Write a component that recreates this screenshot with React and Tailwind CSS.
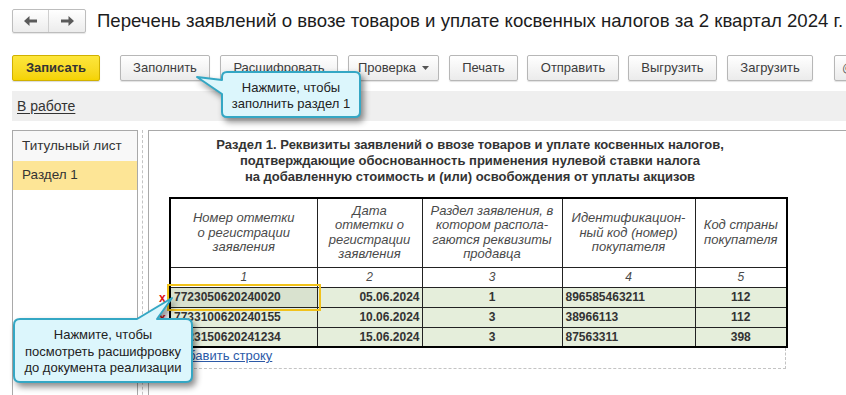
import React from "react";

const btn =
  "h-[26px] shrink-0 rounded-[2px] border border-[#b7b7b7] bg-linear-to-b from-white to-[#ebebeb] text-[13px] text-[#3c3c3c] flex items-center justify-center shadow-[0_1px_1px_rgba(0,0,0,0.12)]";

function Arrow({ dir }) {
  return (
    <svg width="13" height="10" viewBox="0 0 13 10" className={dir === "right" ? "rotate-180" : ""}>
      <path d="M0 5 L5.5 0 V3.4 H13 V6.6 H5.5 V10 Z" fill="#5a5a5a" />
    </svg>
  );
}

const headers = [
  ["Номер отметки", "о регистрации", "заявления"],
  ["Дата", "отметки о", "регистрации", "заявления"],
  ["Раздел заявления, в", "котором распола-", "гаются реквизиты", "продавца"],
  ["Идентификацион-", "ный код (номер)", "покупателя"],
  ["Код страны", "покупателя"],
];

const rows = [
  ["7723050620240020", "05.06.2024", "1", "896585463211", "112"],
  ["7733100620240155", "10.06.2024", "3", "38966113", "112"],
  ["7723150620241234", "15.06.2024", "3", "87563311", "398"],
];

export default function App() {
  return (
    <div
      className="relative h-[395px] w-[846px] overflow-hidden bg-white text-[#333]"
      style={{ fontFamily: '"Liberation Sans", Arial, sans-serif' }}
    >
      {/* header */}
      <div className="flex items-center pl-[12px] pt-[9px]">
        <div className="flex h-[24px] w-[74px] shrink-0 rounded-[2px] border border-[#bdbdbd] bg-linear-to-b from-white to-[#ececec] shadow-[0_1px_1px_rgba(0,0,0,0.1)]">
          <div className="flex w-[36px] items-center justify-center border-r border-[#cfcfcf]">
            <Arrow dir="left" />
          </div>
          <div className="flex flex-1 items-center justify-center">
            <Arrow dir="right" />
          </div>
        </div>
        <div className="ml-[11px] whitespace-nowrap text-[18.6px] leading-[24px] text-[#1c1c1c]">
          Перечень заявлений о ввозе товаров и уплате косвенных налогов за 2 квартал 2024 г.
        </div>
      </div>

      {/* toolbar */}
      <div className="mt-[22px] flex pl-[12px]">
        <div className="flex h-[26px] w-[88px] shrink-0 items-center justify-center rounded-[2px] border border-[#d0b000] bg-linear-to-b from-[#fde63a] to-[#f5d300] text-[13px] font-bold text-[#333] shadow-[0_1px_1px_rgba(0,0,0,0.15)]">
          Записать
        </div>
        <div className={`${btn} ml-[20px] w-[90px]`}>Заполнить</div>
        <div className={`${btn} ml-[10px] w-[118px]`}>Расшифровать</div>
        <div className={`${btn} ml-[10px] w-[91px] gap-[6px]`}>
          Проверка
          <svg width="7" height="4" viewBox="0 0 7 4">
            <path d="M0 0 H7 L3.5 4 Z" fill="#555" />
          </svg>
        </div>
        <div className={`${btn} ml-[10px] w-[69px]`}>Печать</div>
        <div className={`${btn} ml-[9px] w-[92px]`}>Отправить</div>
        <div className={`${btn} ml-[9px] w-[89px]`}>Выгрузить</div>
        <div className={`${btn} ml-[10px] w-[86px]`}>Загрузить</div>
        <div className={`${btn} ml-[21px] w-[40px] justify-start pl-[7px] text-[#666]`}>@</div>
      </div>

      {/* status bar */}
      <div className="ml-[12px] mt-[10px] flex h-[30px] items-center bg-[#efefef] pl-[5px]">
        <span className="text-[14px] text-[#333] underline underline-offset-2">В работе</span>
      </div>

      {/* main */}
      <div className="mt-[9px] flex h-[300px]">
        <div className="ml-[12px] w-[126px] shrink-0 border border-b-0 border-[#a9a9a9]">
          <div className="flex h-[30px] items-center bg-[#f8f8f8] pl-[9px] text-[13.5px] text-[#333]">
            Титульный лист
          </div>
          <div className="flex h-[29px] items-center bg-[#fde596] pl-[9px] text-[13.5px] text-[#333]">
            Раздел 1
          </div>
        </div>
        <div className="ml-[4px] w-0 border-l border-dashed border-[#c4c4c4]" />
        <div className="ml-[5px] flex-1 border-l border-t border-[#a9a9a9]">
          <div className="w-[642px] pt-[6px] text-center text-[13px] font-bold leading-[16px] text-[#333]">
            <div>Раздел 1. Реквизиты заявлений о ввозе товаров и уплате косвенных налогов,</div>
            <div>подтверждающие обоснованность применения нулевой ставки налога</div>
            <div>на добавленную стоимость и (или) освобождения от уплаты акцизов</div>
          </div>

          <div className="ml-[20px] mt-[12px] w-[617px]">
            <table className="w-[617px] table-fixed border-collapse border-2 border-black">
              <colgroup>
                <col className="w-[147px]" />
                <col className="w-[105px]" />
                <col className="w-[140px]" />
                <col className="w-[133px]" />
                <col className="w-[92px]" />
              </colgroup>
              <tbody>
                <tr className="h-[69px]">
                  {headers.map((h, i) => (
                    <td
                      key={i}
                      className="border border-[#222] p-0 text-center align-middle text-[13px] italic leading-[14.5px] text-[#4a4a4a]"
                    >
                      {h.map((l, j) => (
                        <div key={j}>{l}</div>
                      ))}
                    </td>
                  ))}
                </tr>
                <tr className="h-[20px]">
                  {[1, 2, 3, 4, 5].map((n) => (
                    <td
                      key={n}
                      className="border border-[#222] p-0 text-center text-[12px] italic leading-[18px] text-[#4a4a4a]"
                    >
                      {n}
                    </td>
                  ))}
                </tr>
                {rows.map((r, i) => (
                  <tr key={i} className="h-[20px] bg-[#e5eedb] text-[12px] font-bold leading-[18px] text-[#333]">
                    <td
                      className={`relative border border-[#222] p-0 pl-[3px] text-left ${
                        i === 0 ? "bg-[#d9e2cf]" : ""
                      }`}
                    >
                      <span className="absolute left-[-12px] top-[1px] text-[12px] font-bold text-[#e01010]">x</span>
                      {i === 0 && (
                        <span className="absolute left-[-4px] top-[-4px] h-[27px] w-[154px] border-2 border-[#f1c21b]" />
                      )}
                      {r[0]}
                    </td>
                    <td className="border border-[#222] p-0 pr-[2px] text-right">{r[1]}</td>
                    <td className="border border-[#222] p-0 text-center">{r[2]}</td>
                    <td className="border border-[#222] p-0 pl-[3px] text-left">{r[3]}</td>
                    <td className="border border-[#222] p-0 text-center">{r[4]}</td>
                  </tr>
                ))}
              </tbody>
            </table>
            <div className="h-[21px] border-b border-r border-dashed border-[#c4c4c4] pl-[3px] text-[13px] leading-[16px]">
              <span className="text-[#2c5aa8] underline">Добавить строку</span>
            </div>
          </div>
        </div>
      </div>

      {/* callouts overlay */}
      <svg
        className="pointer-events-none absolute left-0 top-0"
        width="846"
        height="395"
        viewBox="0 0 846 395"
        style={{ filter: "drop-shadow(3px 4px 3px rgba(0,0,0,0.45))" }}
      >
        <path
          d="M227 72 H355 Q360 72 360 77 V112 Q360 117 355 117 H227 Q222 117 222 112 V94 L197 77 L222 80 V77 Q222 72 227 72 Z"
          fill="#dcf6fc"
          stroke="#34a7c4"
          strokeWidth="2"
          strokeLinejoin="round"
        />
        <path
          d="M20 319 H137 L172 298 L157 319 H186 Q192 319 192 325 V376 Q192 382 186 382 H20 Q14 382 14 376 V325 Q14 319 20 319 Z"
          fill="#dcf6fc"
          stroke="#34a7c4"
          strokeWidth="2"
          strokeLinejoin="round"
        />
      </svg>
      <div className="pointer-events-none absolute left-[222px] top-[80px] w-[138px] text-center text-[13px] leading-[16px] text-[#222]">
        <div>Нажмите, чтобы</div>
        <div>заполнить раздел 1</div>
      </div>
      <div className="pointer-events-none absolute left-[14px] top-[327px] w-[178px] text-center text-[13px] leading-[16.5px] text-[#222]">
        <div>Нажмите, чтобы</div>
        <div>посмотреть расшифровку</div>
        <div>до документа реализации</div>
      </div>
    </div>
  );
}
